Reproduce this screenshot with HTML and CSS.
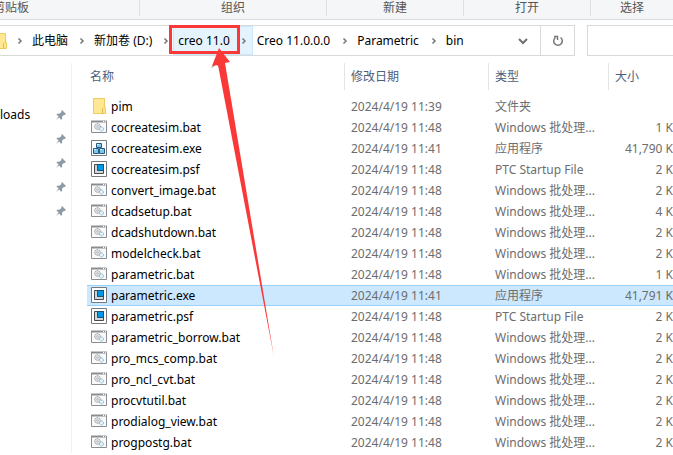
FILE: index.html
```html
<!DOCTYPE html>
<html lang="zh-CN">
<head>
  <meta charset="UTF-8" />
  <title>bin</title>
  <link rel="stylesheet" href="styles.css">
</head>
<body>

  <!-- Shared icons -->
  <svg class="sprite" aria-hidden="true">
    <symbol id="icon-folder" viewBox="0 0 16 16">
      <path d="M2.5 0.5h11v9h1v6h-12z" fill="#ffe793" stroke="#eccb61" />
      <path d="M11.5 15.5v-5l1-1" fill="none" stroke="#e2bb45" />
    </symbol>
    <symbol id="icon-bat" viewBox="0 0 16 16">
      <path d="M0.5 2.5h15v11H0.5z" fill="#fafafa" stroke="#8a8e92" />
      <path d="M0 2.5h16" stroke="#8a8e92" stroke-width="2" />
      <path d="M12 2.5h1M14 2.5h1" stroke="#fff" />
      <circle cx="6.5" cy="7.5" r="2.8" fill="#e4e6e8" stroke="#94989c" stroke-dasharray="1.5 0.5" />
      <circle cx="6.5" cy="7.5" r="0.8" fill="#fff" stroke="#a4a8ac" stroke-width="0.8" />
      <circle cx="10.5" cy="10" r="2" fill="#e8f5fd" stroke="#7fb9dc" stroke-dasharray="1.5 0.5" />
    </symbol>
    <symbol id="icon-blocks" viewBox="0 0 16 16">
      <path d="M0.5 0.5h15v15H0.5z" fill="#fff" stroke="#777b7e" />
      <path d="M5.5 3.5h5v4h-5zM2.5 8.5h5v5h-5zM8.5 8.5h5v5h-5z" fill="#7cc8ed" stroke="#285a80" />
      <path d="M6 4.5h2M3 9.5h2M9 9.5h2" stroke="#d6f0fc" />
    </symbol>
    <symbol id="icon-app" viewBox="0 0 16 16">
      <path d="M0.5 0.5h15v15H0.5z" fill="#fff" stroke="#777b7e" />
      <path d="M3.5 3.5h9v9h-9z" fill="#d3d5d6" stroke="#45494c" />
      <path d="M6.5 3.5h6v6h-6z" fill="#0098e6" stroke="#17527a" />
    </symbol>
    <symbol id="icon-pin" viewBox="0 0 12 12">
      <path d="M7 1l4 4-1 1-1-.3-2 2 .2 2-1 1L4 8.5 1 11l2.5-3.5L1.5 5.5l1-1 2 .2 2-2L6.2 2z" fill="#8d9ba8" />
    </symbol>
    <symbol id="icon-next" viewBox="0 0 8 8">
      <path d="M2.5 1.500L5 4 2.500 6.500" fill="none" stroke="#777" stroke-width="1.5" />
    </symbol>
  </svg>

  <div class="ribbon">
    <div class="group clipboard">剪贴板</div>
    <div class="group organize">组织</div>
    <div class="group new">新建</div>
    <div class="group open">打开</div>
    <div class="group select">选择</div>
  </div>

  <div class="toolbar">
    <nav class="address">
      <svg class="address-folder"><use href="#icon-folder" /></svg>
      <svg class="next"><use href="#icon-next" /></svg>
      <a class="crumb" href="#">此电脑</a>
      <svg class="next"><use href="#icon-next" /></svg>
      <a class="crumb" href="#">新加卷 (D:)</a>
      <svg class="next"><use href="#icon-next" /></svg>
      <span class="current">
        <a class="crumb" href="#">creo 11.0</a>
        <svg class="next"><use href="#icon-next" /></svg>
        <svg class="marker" viewBox="0 0 110 336" aria-hidden="true">
          <path d="M2.5 1.5h68v26h-68z" fill="none" stroke="#fb3838" stroke-width="3" />
          <path d="M51 23L44 41l6-1L106 332 57 38l5-1z" fill="#fb3838" />
        </svg>
      </span>
      <a class="crumb" href="#">Creo 11.0.0.0</a>
      <svg class="next"><use href="#icon-next" /></svg>
      <a class="crumb" href="#">Parametric</a>
      <svg class="next"><use href="#icon-next" /></svg>
      <a class="crumb" href="#">bin</a>
      <button class="history" type="button" aria-label="History">
        <svg viewBox="0 0 10 10"><path d="M1 3l4 4 4-4" fill="none" stroke="#707070" stroke-width="2" /></svg>
      </button>
      <button class="refresh" type="button" aria-label="Refresh">
        <svg viewBox="0 0 12 12"><path d="M3.5 2.5A4.300 4.300 0 1 0 8.500 2.500M2 1.500h3.500V5" fill="none" stroke="#777" stroke-width="1.5" /></svg>
      </button>
    </nav>
    <input class="search" type="text" aria-label="Search">
  </div>

  <div class="content">
    <ul class="sidebar">
      <li><span>loads</span><svg><use href="#icon-pin" /></svg></li>
      <li><svg><use href="#icon-pin" /></svg></li>
      <li><svg><use href="#icon-pin" /></svg></li>
      <li><svg><use href="#icon-pin" /></svg></li>
      <li><svg><use href="#icon-pin" /></svg></li>
    </ul>

    <main class="files">
      <table>
        <colgroup>
          <col class="col-name"><col class="col-date"><col class="col-type"><col>
        </colgroup>
        <thead>
          <tr>
            <th class="sorted">名称<svg class="caret" viewBox="0 0 10 5"><path d="M1 4.5l4-4 4 4" fill="none" stroke="#666" /></svg></th>
            <th>修改日期</th>
            <th>类型</th>
            <th>大小</th>
          </tr>
        </thead>
        <tbody>
          <tr><td><svg><use href="#icon-folder" /></svg>pim</td><td>2024/4/19 11:39</td><td>文件夹</td><td></td></tr>
          <tr><td><svg><use href="#icon-bat" /></svg>cocreatesim.bat</td><td>2024/4/19 11:48</td><td>Windows 批处理...</td><td>1 K</td></tr>
          <tr><td><svg><use href="#icon-blocks" /></svg>cocreatesim.exe</td><td>2024/4/19 11:41</td><td>应用程序</td><td>41,790 K</td></tr>
          <tr><td><svg><use href="#icon-app" /></svg>cocreatesim.psf</td><td>2024/4/19 11:48</td><td>PTC Startup File</td><td>2 K</td></tr>
          <tr><td><svg><use href="#icon-bat" /></svg>convert_image.bat</td><td>2024/4/19 11:48</td><td>Windows 批处理...</td><td>2 K</td></tr>
          <tr><td><svg><use href="#icon-bat" /></svg>dcadsetup.bat</td><td>2024/4/19 11:48</td><td>Windows 批处理...</td><td>4 K</td></tr>
          <tr><td><svg><use href="#icon-bat" /></svg>dcadshutdown.bat</td><td>2024/4/19 11:48</td><td>Windows 批处理...</td><td>2 K</td></tr>
          <tr><td><svg><use href="#icon-bat" /></svg>modelcheck.bat</td><td>2024/4/19 11:48</td><td>Windows 批处理...</td><td>2 K</td></tr>
          <tr><td><svg><use href="#icon-bat" /></svg>parametric.bat</td><td>2024/4/19 11:48</td><td>Windows 批处理...</td><td>1 K</td></tr>
          <tr class="selected"><td><svg><use href="#icon-app" /></svg>parametric.exe</td><td>2024/4/19 11:41</td><td>应用程序</td><td>41,791 K</td></tr>
          <tr><td><svg><use href="#icon-app" /></svg>parametric.psf</td><td>2024/4/19 11:48</td><td>PTC Startup File</td><td>2 K</td></tr>
          <tr><td><svg><use href="#icon-bat" /></svg>parametric_borrow.bat</td><td>2024/4/19 11:48</td><td>Windows 批处理...</td><td>2 K</td></tr>
          <tr><td><svg><use href="#icon-bat" /></svg>pro_mcs_comp.bat</td><td>2024/4/19 11:48</td><td>Windows 批处理...</td><td>2 K</td></tr>
          <tr><td><svg><use href="#icon-bat" /></svg>pro_ncl_cvt.bat</td><td>2024/4/19 11:48</td><td>Windows 批处理...</td><td>2 K</td></tr>
          <tr><td><svg><use href="#icon-bat" /></svg>procvtutil.bat</td><td>2024/4/19 11:48</td><td>Windows 批处理...</td><td>2 K</td></tr>
          <tr><td><svg><use href="#icon-bat" /></svg>prodialog_view.bat</td><td>2024/4/19 11:48</td><td>Windows 批处理...</td><td>2 K</td></tr>
          <tr><td><svg><use href="#icon-bat" /></svg>progpostg.bat</td><td>2024/4/19 11:48</td><td>Windows 批处理...</td><td>2 K</td></tr>
        </tbody>
      </table>
    </main>
  </div>

</body>
</html>
```

FILE: styles.css
```css
* {
  box-sizing: border-box;
  margin: 0;
  padding: 0;
}
body {
  font-family: 'Noto Sans', 'Noto Sans CJK SC', sans-serif;
  font-size: 12px;
  line-height: 16px;
  color: #000;
  background: #fff;
  min-height: 100vh;
  overflow: hidden;
}
svg {
  display: block;
  flex: none;
}
.sprite {
  width: 0;
  height: 0;
  position: absolute;
}

/* Ribbon */
.ribbon {
  display: flex;
  height: 20px;
  background: #f5f6f7;
  border-bottom: 1px solid #dadbdc;
}
.group {
  height: 16px;
  border-right: 1px solid #dfe0e1;
  color: #555;
  text-align: center;
}
.clipboard {
  width: 140px;
  text-indent: -7px;
  text-align: left;
}
.organize {
  width: 187px;
}
.new {
  width: 137px;
}
.open {
  width: 127px;
}
.select {
  flex: 1;
  border-right: none;
}

/* Address bar */
.toolbar {
  display: flex;
  gap: 12px;
  padding-top: 5px;
}
.address {
  display: flex;
  align-items: center;
  flex: 1;
  height: 31px;
  border: 1px solid #d9d9d9;
  border-left: none;
}
.address-folder {
  width: 16px;
  height: 16px;
  margin-left: -8px;
}
.next {
  width: 8px;
  height: 8px;
  margin: 0 8px;
}
.crumb {
  padding-right: 2px;
  color: #000;
  text-decoration: none;
  white-space: nowrap;
}
.current ~ .crumb {
  padding-right: 3px;
}
.current {
  position: relative;
  z-index: 1;
  display: flex;
  align-items: center;
  height: 29px;
  padding-left: 4px;
  margin-right: 4px;
  background: #e5f3ff;
  border: 1px solid #cce8ff;
}
.current .next {
  margin: 0 4px 0 8px;
}
.next:has(+ .current) {
  margin-right: 3px;
}
.marker {
  position: absolute;
  left: -6px;
  top: -2px;
  width: 110px;
  height: 336px;
  pointer-events: none;
}
.history,
.refresh {
  display: flex;
  align-items: center;
  justify-content: center;
  width: 34px;
  height: 29px;
  background: none;
  border: none;
}
.history {
  margin-left: auto;
}
.history svg {
  width: 10px;
  height: 10px;
}
.refresh {
  border-left: 1px solid #d9d9d9;
}
.refresh svg {
  width: 12px;
  height: 12px;
}
.search {
  width: 86px;
  height: 31px;
  border: 1px solid #d9d9d9;
  border-right: none;
  outline: none;
}

/* Panes */
.content {
  display: flex;
  padding-top: 7px;
}
.sidebar {
  width: 72px;
  padding-top: 40px;
  border-right: 1px solid #f0f0f0;
  list-style: none;
}
.sidebar li {
  display: flex;
  align-items: center;
  height: 24px;
  padding-right: 4px;
}
.sidebar svg {
  width: 12px;
  height: 12px;
  margin-left: auto;
}
.files {
  flex: 1;
  padding-left: 15px;
}

/* File list */
table {
  width: 100%;
  table-layout: fixed;
  border-collapse: separate;
  border-spacing: 0;
}
.col-name {
  width: 258px;
}
.col-date {
  width: 144px;
}
.col-type {
  width: 120px;
}
th {
  height: 27px;
  padding-left: 6px;
  border-right: 1px solid #e5e5e5;
  color: #4c607a;
  font-weight: normal;
  text-align: left;
}
th:first-child {
  padding-left: 3px;
}
th:last-child {
  border-right: none;
}
.sorted {
  position: relative;
}
.caret {
  position: absolute;
  top: 0;
  left: calc(50% - 5px);
  width: 10px;
  height: 5px;
}
thead::after {
  content: "";
  display: block;
  height: 6px;
}
td {
  height: 21px;
  padding-left: 6px;
  color: #6d6d6d;
  white-space: nowrap;
}
td:first-child {
  padding-left: 4px;
  color: #000;
}
td:last-child {
  text-align: right;
}
td svg {
  display: inline-block;
  width: 16px;
  height: 16px;
  margin-right: 4px;
  vertical-align: -3px;
}
.selected td {
  background: #cce8ff;
  box-shadow: inset 0 1px #99d1ff, inset 0 -1px #99d1ff;
}
```
